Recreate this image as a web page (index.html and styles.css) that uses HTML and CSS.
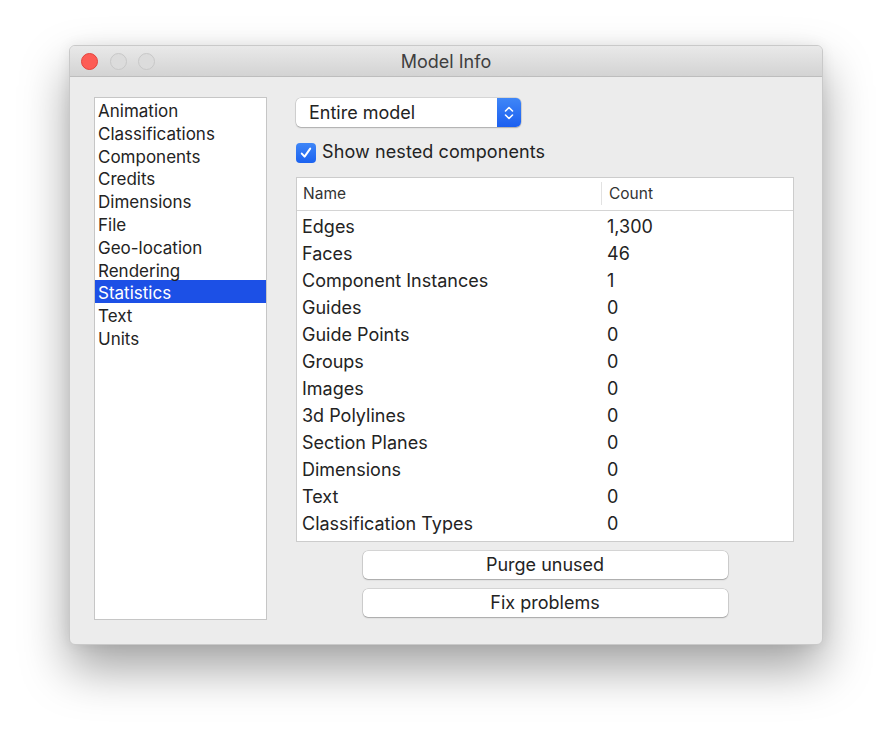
FILE: index.html
```html
<!DOCTYPE html>
<html>
<head>
<meta charset="utf-8">
<title>Model Info</title>
<link rel="stylesheet" href="styles.css">
</head>
<body>
<div class="window">
  <div class="titlebar">
    <div class="lights">
      <span class="light close"></span>
      <span class="light"></span>
      <span class="light"></span>
    </div>
    <div class="title">Model Info</div>
    <div></div>
  </div>
  <div class="content">
    <ul class="sidebar">
      <li>Animation</li>
      <li>Classifications</li>
      <li>Components</li>
      <li>Credits</li>
      <li>Dimensions</li>
      <li>File</li>
      <li>Geo-location</li>
      <li>Rendering</li>
      <li class="selected">Statistics</li>
      <li>Text</li>
      <li>Units</li>
    </ul>
    <div class="main">
      <div class="select">
        <span class="select-label">Entire model</span>
        <span class="stepper">
          <svg width="12" height="18" viewBox="0 0 12 18"><path d="M2.5 7 L6 3.5 L9.5 7" fill="none" stroke="#fff" stroke-width="1.6" stroke-linecap="round" stroke-linejoin="round"/><path d="M2.5 11 L6 14.5 L9.5 11" fill="none" stroke="#fff" stroke-width="1.6" stroke-linecap="round" stroke-linejoin="round"/></svg>
        </span>
      </div>
      <div class="check">
        <span class="box"><svg width="14" height="14" viewBox="0 0 14 14"><path d="M2.8 7.6 L5.6 10.6 L11.2 2.6" fill="none" stroke="#fff" stroke-width="2" stroke-linecap="round" stroke-linejoin="round"/></svg></span>
        <span class="check-label">Show nested components</span>
      </div>
      <div class="table">
        <div class="thead">
          <div class="th name">Name</div>
          <div class="th count">Count</div>
        </div>
        <div class="tbody">
          <div class="tr"><span>Edges</span><span>1,300</span></div>
          <div class="tr"><span>Faces</span><span>46</span></div>
          <div class="tr"><span>Component Instances</span><span>1</span></div>
          <div class="tr"><span>Guides</span><span>0</span></div>
          <div class="tr"><span>Guide Points</span><span>0</span></div>
          <div class="tr"><span>Groups</span><span>0</span></div>
          <div class="tr"><span>Images</span><span>0</span></div>
          <div class="tr"><span>3d Polylines</span><span>0</span></div>
          <div class="tr"><span>Section Planes</span><span>0</span></div>
          <div class="tr"><span>Dimensions</span><span>0</span></div>
          <div class="tr"><span>Text</span><span>0</span></div>
          <div class="tr"><span>Classification Types</span><span>0</span></div>
        </div>
      </div>
      <div class="buttons">
        <button class="btn">Purge unused</button>
        <button class="btn">Fix problems</button>
      </div>
    </div>
  </div>
</div>
</body>
</html>
```

FILE: styles.css
```css
* { box-sizing: border-box; }
html, body { margin: 0; padding: 0; background: #ffffff; }
body {
  font-family: Inter, "Liberation Sans", sans-serif;
  color: #232323;
  width: 891px;
  height: 741px;
  overflow: hidden;
}
.window {
  margin: 45px 0 0 69px;
  width: 754px;
  height: 600px;
  background: #ececec;
  border: 1px solid #c9c9c9;
  border-radius: 6px;
  box-shadow: 0 24px 48px rgba(0,0,0,0.36), 0 0 14px rgba(0,0,0,0.07);
  overflow: hidden;
  display: flex;
  flex-direction: column;
}
.titlebar {
  height: 31px;
  flex: none;
  display: grid;
  grid-template-columns: 1fr auto 1fr;
  align-items: center;
  background: linear-gradient(#e9e9e9, #d3d3d3);
  border-bottom: 1px solid #bdbdbd;
}
.lights {
  display: flex;
  gap: 11.5px;
  padding-left: 11px;
  align-items: center;
}
.light {
  width: 17px;
  height: 17px;
  border-radius: 50%;
  background: #dcdcdc;
  border: 1px solid #c8c8c8;
}
.light.close {
  background: #fd5c55;
  border-color: #e3433c;
}
.title {
  font-size: 18px;
  color: #3f3f3f;
  padding-top: 1px;
}
.content {
  flex: 1;
  display: flex;
  padding: 20px 0 0 24px;
  gap: 29px;
}
.sidebar {
  list-style: none;
  margin: 0;
  padding: 0;
  width: 173px;
  height: 523px;
  background: #fff;
  border: 1px solid #c6c6c6;
  font-size: 17px;
}
.sidebar li {
  height: 22.8px;
  line-height: 26.5px;
  padding-left: 3px;
  white-space: nowrap;
}
.sidebar li.selected {
  background: #1c50e6;
  color: #fff;
}
.main {
  width: 498px;
  padding-top: 1px;
  display: flex;
  flex-direction: column;
}
.select {
  width: 225px;
  height: 29px;
  display: flex;
  background: #fff;
  border-radius: 5px;
  box-shadow: 0 0 0 0.5px rgba(0,0,0,0.18), 0 1px 1.5px rgba(0,0,0,0.2);
  overflow: hidden;
}
.select-label {
  flex: 1;
  font-size: 18px;
  line-height: 29px;
  padding-left: 13px;
}
.stepper {
  width: 24px;
  background: linear-gradient(#3f86f7, #1b5ff0);
  display: flex;
  align-items: center;
  justify-content: center;
}
.check {
  margin-top: 16px;
  display: flex;
  align-items: center;
  gap: 6px;
  height: 20px;
}
.box {
  width: 20px;
  height: 20px;
  border-radius: 4px;
  background: linear-gradient(#3f86f7, #1b62f0);
  display: flex;
  align-items: center;
  justify-content: center;
}
.check-label {
  font-size: 18px;
  letter-spacing: 0.1px;
  padding-bottom: 3px;
}
.table {
  margin-top: 14px;
  height: 365px;
  background: #fff;
  border: 1px solid #cccccc;
}
.thead {
  display: flex;
  height: 33px;
  border-bottom: 1px solid #d4d4d4;
  align-items: center;
  font-size: 15.5px;
  color: #333;
  padding-bottom: 2px;
}
.th.name {
  width: 304px;
  padding-left: 6px;
}
.th.count {
  flex: 1;
  height: 23px;
  line-height: 23px;
  border-left: 1px solid #e2e2e2;
  padding-left: 7px;
}
.tbody {
  padding-top: 2px;
}
.tr {
  display: flex;
  height: 27px;
  line-height: 28px;
  font-size: 18px;
}
.tr span:first-child {
  width: 310px;
  padding-left: 5px;
}
.buttons {
  margin-top: 9px;
  display: flex;
  flex-direction: column;
  align-items: center;
  gap: 10px;
}
.btn {
  width: 365px;
  height: 28px;
  border: none;
  border-radius: 5px;
  background: #fff;
  box-shadow: 0 0 0 0.5px rgba(0,0,0,0.2), 0 1px 1.5px rgba(0,0,0,0.22);
  font-family: inherit;
  font-size: 18px;
  color: #232323;
  padding: 0 0 1px;
}
```
